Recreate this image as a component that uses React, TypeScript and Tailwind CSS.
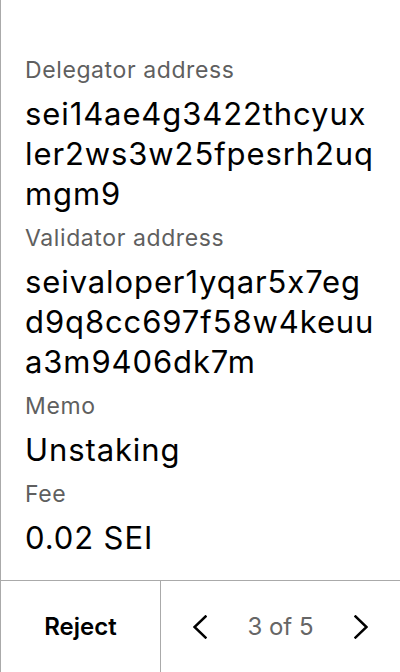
import React from "react";

const fields = [
  { label: "Delegator address", lines: ["sei14ae4g3422thcyux", "ler2ws3w25fpesrh2uq", "mgm9"] },
  { label: "Validator address", lines: ["seivaloper1yqar5x7eg", "d9q8cc697f58w4keuu", "a3m9406dk7m"] },
  { label: "Memo", lines: ["Unstaking"] },
  { label: "Fee", lines: ["0.02 SEI"] },
];

export default function App() {
  return (
    <div
      className="w-[400px] h-[672px] bg-white border-l border-[#aaaaaa] flex flex-col text-black"
      style={{ fontFamily: "Inter, 'Noto Sans', sans-serif", fontFeatureSettings: "'calt' 0" }}
    >
      <div className="flex-1 flex flex-col pl-6 pr-5 pt-[56px] gap-[10px]">
        {fields.map((f) => (
          <div key={f.label} className="flex flex-col gap-[10px]">
            <div className="text-[23px] leading-[28px] tracking-[0.6px] text-[#5f5f5f]">{f.label}</div>
            <div className="text-[31px] leading-[40px] tracking-[0.9px]">
              {f.lines.map((l) => (
                <div key={l} className="whitespace-nowrap">{l}</div>
              ))}
            </div>
          </div>
        ))}
      </div>
      <div className="h-[92px] border-t border-[#aaaaaa] flex">
        <button className="w-[160px] border-r border-[#aaaaaa] flex items-center justify-center text-[24px] font-semibold">
          Reject
        </button>
        <div className="flex-1 flex items-center justify-between px-[32px]">
          <svg width="14" height="24" viewBox="0 0 14 24" fill="none" stroke="black" strokeWidth="2.5" strokeLinecap="square">
            <path d="M12.5 1.5 L1.5 12 L12.5 22.5" />
          </svg>
          <span className="text-[24px] text-[#666666]">3 of 5</span>
          <svg width="14" height="24" viewBox="0 0 14 24" fill="none" stroke="black" strokeWidth="2.5" strokeLinecap="square">
            <path d="M1.5 1.5 L12.5 12 L1.5 22.5" />
          </svg>
        </div>
      </div>
    </div>
  );
}
